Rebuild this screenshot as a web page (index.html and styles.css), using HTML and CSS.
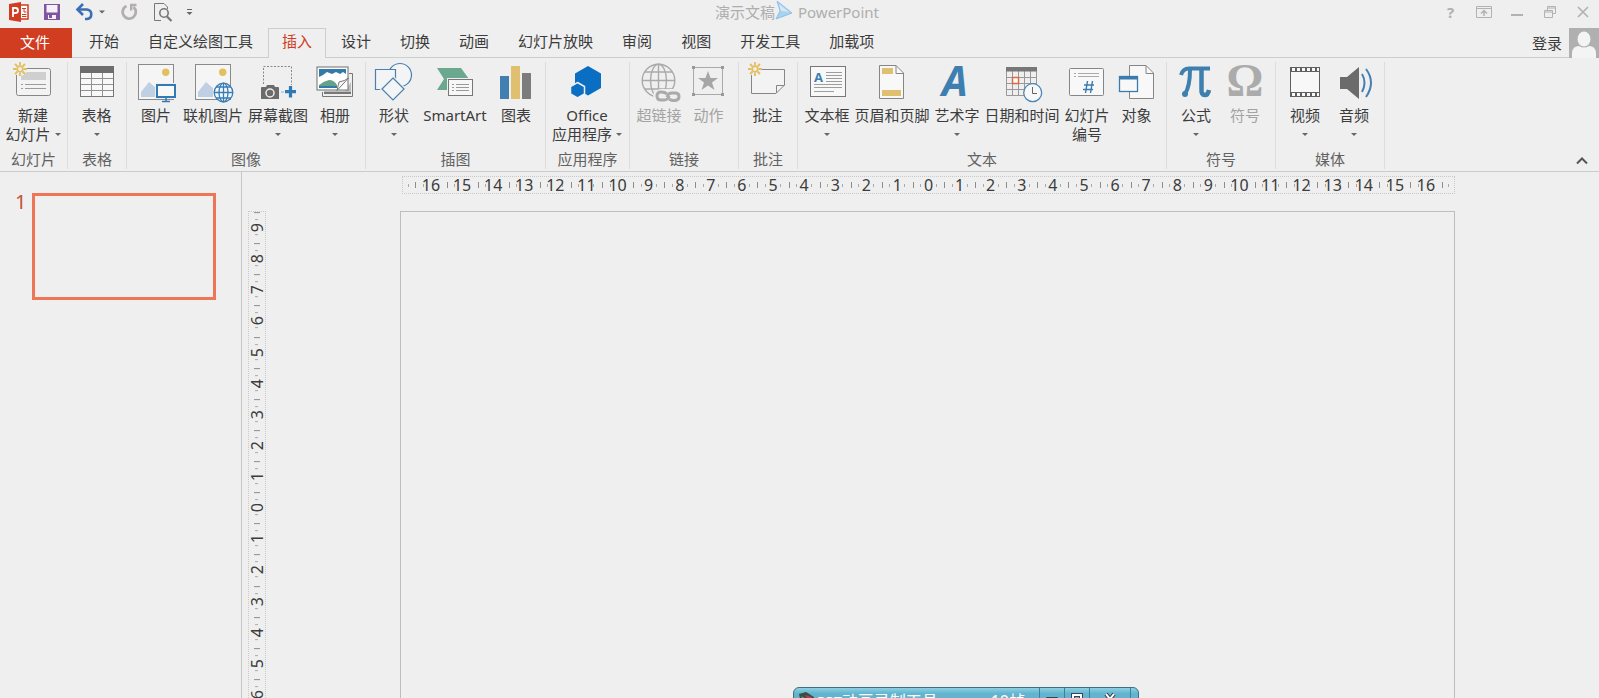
FILE: index.html
```html
<!DOCTYPE html>
<html lang="zh-CN">
<head>
<meta charset="utf-8">
<title>演示文稿 - PowerPoint</title>
<link rel="stylesheet" href="styles.css">
</head>
<body>
<svg class="defs" aria-hidden="true">
  <defs>
    <g id="sun" stroke="#e3bf62" stroke-width="1.8" fill="none">
      <path d="M0-7V-3.500M0 7V3.500M-7 0H-3.500M7 0H3.500M-5-5L-2.500-2.500M5 5L2.500 2.500M-5 5L-2.500 2.500M5-5L2.500-2.500"/>
      <circle r="2.800" fill="#efefef"/>
    </g>
    <g id="picture">
      <rect x="2.500" y="2.500" width="35" height="35" fill="#f5f5f5" stroke="#8a8a8a"/>
      <path d="M5 35V30L13 20L20 26V35Z" fill="#bfd0e4"/>
      <circle cx="29.700" cy="10.300" r="3.700" fill="#e3bf62"/>
    </g>
  </defs>
</svg>
<div class="app">
  <header class="titlebar">
    <div class="quick">
      <svg width="20" height="20" viewBox="0 0 20 20" role="img" aria-label="PowerPoint"><path d="M11 3H19V17H11Z" fill="#fff" stroke="#cf3e22" stroke-width="1.500"/><path d="M13 6.500H17M15 6V10H17.500M13 12.500H17.500M13 14.500H17.500" stroke="#cf3e22" fill="none"/><path d="M0 2L12 0V20L0 18Z" fill="#cf3e22"/><path d="M4 15V6H6.500A2.500 2.500 0 0 1 6.500 11H4" fill="none" stroke="#fff" stroke-width="1.800"/></svg>
      <button class="q-save" aria-label="保存"><svg width="16" height="16" viewBox="0 0 16 16"><path d="M0 0H16V16H0Z" fill="#7f54a0"/><path d="M2.500 1H13.500V8.500H2.500ZM4 11H12V15H4Z" fill="#f4f0f6"/><path d="M5 11H8V14H5Z" fill="#7f54a0"/></svg></button>
      <button class="q-undo" aria-label="撤消"><svg width="28" height="18" viewBox="0 0 28 18"><path d="M2 6.500H11A5 4.800 0 0 1 11 16H9" fill="none" stroke="#3a6fb5" stroke-width="2.600"/><path d="M7 1L1.500 6.500L7 12" fill="none" stroke="#3a6fb5" stroke-width="2.600"/><path d="M23 7.500H29L26 10.500Z" fill="#666"/></svg></button>
      <button class="q-redo" aria-label="恢复"><svg width="17" height="18" viewBox="0 0 17 18"><path d="M5.500 3A6.600 6.600 0 1 0 12.500 4" fill="none" stroke="#b3adb0" stroke-width="2.800"/><path d="M9 2H15.500M10.200 1.500V7.500" fill="none" stroke="#b3adb0" stroke-width="2.400"/></svg></button>
      <button class="q-view" aria-label="打印预览"><svg width="20" height="20" viewBox="0 0 20 20" fill="none" stroke="#777"><path d="M8 18.500H1.500V1.500H11L14.500 5V7"/><circle cx="11" cy="11" r="4.200" stroke-width="1.600"/><path d="M14 14.500L18.500 19" stroke-width="2.200"/></svg></button>
      <button class="q-more" aria-label="自定义快速访问工具栏"><svg width="7" height="8" viewBox="0 0 7 8"><path d="M1 1.500H6" stroke="#666"/><path d="M.5 4H6.500L3.500 7Z" fill="#666"/></svg></button>
    </div>
    <div class="title"><span>演示文稿</span><svg class="pointer" width="18" height="22" viewBox="0 0 18 22"><path d="M2 0L17 12L1 18L5 10Z" fill="#a9d2ee" stroke="#8fc0e4"/><path d="M4 3L14 11L6 10Z" fill="#d2e9f8"/></svg><span>PowerPoint</span></div>
    <div class="winctl">
      <button aria-label="帮助" class="help">?</button>
      <button aria-label="功能区显示选项"><svg width="16" height="12" viewBox="0 0 16 12" fill="none" stroke="#b2b2b2"><path d="M.5.500H15.500V11.500H.5ZM.5 2.500H15.500"/><path d="M8 10V4.500M5 7.500L8 4.500L11 7.500" stroke-width="1.500"/></svg></button>
      <button aria-label="最小化"><svg width="12" height="12" viewBox="0 0 12 12"><path d="M0 9H12" stroke="#b2b2b2" stroke-width="2"/></svg></button>
      <button aria-label="还原"><svg width="12" height="12" viewBox="0 0 12 12" fill="none" stroke="#b2b2b2"><path d="M.5 4.500H8.500V11.500H.5ZM.5 6H8.500M3.500 4V.5H11.500V7.500H9M3.500 2H11.500"/></svg></button>
      <button aria-label="关闭"><svg width="12" height="12" viewBox="0 0 12 12"><path d="M1 1L11 11M11 1L1 11" stroke="#b2b2b2" stroke-width="1.700"/></svg></button>
    </div>
  </header>

  <nav class="tabs">
    <button class="file">文件</button>
    <button class="tab">开始</button>
    <button class="tab">自定义绘图工具</button>
    <button class="tab active">插入</button>
    <button class="tab">设计</button>
    <button class="tab">切换</button>
    <button class="tab">动画</button>
    <button class="tab">幻灯片放映</button>
    <button class="tab">审阅</button>
    <button class="tab">视图</button>
    <button class="tab">开发工具</button>
    <button class="tab">加载项</button>
    <button class="login">登录<svg width="30" height="30" viewBox="0 0 30 30"><path d="M0 0H30V30H0Z" fill="#b0b0b0"/><ellipse cx="15" cy="11" rx="6.500" ry="7.500" fill="#f4f4f4"/><path d="M3 30V24Q4 18 10 18Q15 21 20 18Q26 18 27 24V30Z" fill="#f4f4f4"/></svg></button>
  </nav>

  <section class="ribbon" aria-label="插入">
    <div class="group w-slide">
      <div class="tools">
        <button class="tool"><svg class="ico" viewBox="0 0 40 42"><rect x="3.500" y="6.500" width="34" height="27" rx="2" fill="#f3f3f3" stroke="#868686"/><path d="M8 10H33V18H8Z" fill="#cfcfcf"/><path d="M8 22.500H10M12 22.500H33M8 26.500H10M12 26.500H33" stroke="#9c9c9c"/><circle cx="7" cy="7" r="7" fill="#efefef"/><use href="#sun" x="7" y="7"/></svg><span>新建</span><span class="drop">幻灯片</span></button>
      </div>
      <div class="caption">幻灯片</div>
    </div>
    <div class="group w-single">
      <div class="tools">
        <button class="tool"><svg class="ico" viewBox="0 0 40 42"><rect x="3.500" y="4.500" width="33" height="30" fill="#f8f8f8" stroke="#777"/><path d="M3 4H37V11H3Z" fill="#6d6d6d"/><path d="M14.500 11V34M25.500 11V34M4 16.500H36M4 22.500H36M4 28.500H36" stroke="#929292"/></svg><span>表格</span><span class="drop"></span></button>
      </div>
      <div class="caption">表格</div>
    </div>
    <div class="group w-image">
      <div class="tools">
        <button class="tool"><svg class="ico" viewBox="0 0 40 42"><use href="#picture"/><rect x="19" y="21" width="22" height="16" fill="#efefef"/><rect x="21" y="23" width="18" height="12" fill="#f8f8f8" stroke="#337ab5" stroke-width="2"/><path d="M30 35V39M26 39.500H34" stroke="#337ab5" stroke-width="1.500"/></svg><span>图片</span></button>
        <button class="tool"><svg class="ico" viewBox="0 0 40 42"><use href="#picture"/><g fill="none" stroke="#3a7db5" stroke-width="1.300"><circle cx="30.500" cy="30.500" r="9.300" fill="#f5f8fa"/><ellipse cx="30.500" cy="30.500" rx="4.500" ry="9.300"/><path d="M30.500 21V40M21 30.500H40M23 25H38M23 36H38"/></g></svg><span>联机图片</span></button>
        <button class="tool"><svg class="ico" viewBox="0 0 40 42"><path d="M5.500 22V4.500H33.500V23" fill="none" stroke="#888" stroke-dasharray="2 1.500"/><path d="M3 26Q3 25 4 25H8L9 23H16L17 25H20Q21 25 21 26V37H3Z" fill="#6b6b6b"/><circle cx="12" cy="31" r="4" fill="#6b6b6b" stroke="#eee" stroke-width="1.500"/><path d="M32.500 24V35.500M27 29.700H38" stroke="#2f79b5" stroke-width="3.200"/><path d="M23 30H26" stroke="#8fb5d5"/></svg><span>屏幕截图</span><span class="drop"></span></button>
        <button class="tool"><svg class="ico" viewBox="0 0 40 42"><path d="M34 11.500H37.500V34.500H7.500V30" fill="none" stroke="#777"/><path d="M9 32V29H30L36 20V32Z" fill="#bdbdbd"/><path d="M9 31H36" stroke="#777" stroke-width="2"/><rect x="2" y="5" width="31" height="23" fill="#fff" stroke="#6e6e6e"/><path d="M4 7H31V12L28 10L25 12L21 10L17 12L12 10L8 13L4 15Z" fill="#337aa8"/><path d="M4 23Q9 19 14 18Q19 18 22 23V25H4Z" fill="#62a286"/><path d="M4 25H22" stroke="#337aa8" stroke-width="2"/><path d="M33.500 16L22 28.500L24 20Q30 19 33.500 16Z" fill="#f8f8f8" stroke="#777"/></svg><span>相册</span><span class="drop"></span></button>
      </div>
      <div class="caption">图像</div>
    </div>
    <div class="group w-illus">
      <div class="tools">
        <button class="tool"><svg class="ico" viewBox="0 0 40 42" fill="#f2f4f6" stroke="#4a7fae" stroke-width="1.200"><circle cx="26" cy="13" r="11.500"/><path d="M1.500 7.500H21.500V27.500H1.500Z"/><path d="M19 16L30 27L19 38L8 27Z" stroke="#efefef" stroke-width="3.500"/><path d="M19 16L30 27L19 38L8 27Z"/></svg><span>形状</span><span class="drop"></span></button>
        <button class="tool smart"><svg class="ico" viewBox="0 0 40 42"><path d="M2 6H26L34 17L26 28H2L9 17Z" fill="#6aa890"/><rect x="12" y="16" width="27" height="19" fill="#efefef"/><rect x="13.500" y="17.500" width="24" height="16" fill="#f7f7f7" stroke="#777"/><path d="M17 22.500H19M21 22.500H34M17 25.500H19M21 25.500H34M17 28.500H19M21 28.500H34" stroke="#999"/></svg><span>SmartArt</span></button>
        <button class="tool"><svg class="ico" viewBox="0 0 40 42"><path d="M4 14H13V37H4Z" fill="#417fb0"/><path d="M15 4H24V37H15Z" fill="#e0bf6e"/><path d="M26 11H35V37H26Z" fill="#7c7c7c"/></svg><span>图表</span></button>
      </div>
      <div class="caption">插图</div>
    </div>
    <div class="group w-app">
      <div class="tools">
        <button class="tool"><svg class="ico" viewBox="0 0 40 42" fill="#0a6fc2"><path d="M21 4L34 11.500V26L21 33.500L8 26V11.500Z"/><path d="M10.500 20.500L17.500 24.500V32L10.500 36L3.500 32V24.500Z" stroke="#efefef" stroke-width="1.500"/></svg><span>Office</span><span class="drop">应用程序</span></button>
      </div>
      <div class="caption">应用程序</div>
    </div>
    <div class="group w-pair">
      <div class="tools">
        <button class="tool" disabled><svg class="ico" viewBox="0 0 40 42" fill="none" stroke="#aaa" stroke-width="1.400"><circle cx="19.500" cy="18.500" r="16.300"/><ellipse cx="19.500" cy="18.500" rx="8" ry="16.300"/><path d="M19.500 2V35M3 18.500H36M6 10H33M6 27H33"/><path d="M14 34Q14 28 22 27H35Q42 28 42 35V41H20Z" fill="#efefef" stroke="none"/><g stroke-width="3"><path d="M28 32Q26 30 22 30Q18 30 18 34Q18 38 22 38H25Q29 38 30 34"/><path d="M30 37Q33 39 36 38.500Q40 38 40 34.500Q40 31 36 31H33Q29 31 28 35"/></g></svg><span>超链接</span></button>
        <button class="tool" disabled><svg class="ico" viewBox="0 0 40 42"><rect x="4.500" y="5.500" width="29" height="27" fill="none" stroke="#aaa"/><path d="M3 4H6V7H3ZM32 4H35V7H32ZM3 31H6V34H3ZM32 31H35V34H32Z" fill="#999"/><path d="M19 9L21.500 16H29L23 20.500L25.500 28L19 23.500L12.500 28L15 20.500L9 16H16.500Z" fill="#a6a6a6"/></svg><span>动作</span></button>
      </div>
      <div class="caption">链接</div>
    </div>
    <div class="group w-single">
      <div class="tools">
        <button class="tool"><svg class="ico" viewBox="0 0 40 42"><path d="M3.500 7.500H36.500V23L28 31.500H3.500Z" fill="#f3f3f3" stroke="#868686"/><path d="M36.500 23.500H28.500V31" fill="none" stroke="#868686"/><circle cx="7" cy="7" r="7" fill="#efefef"/><use href="#sun" x="7" y="7"/></svg><span>批注</span></button>
      </div>
      <div class="caption">批注</div>
    </div>
    <div class="group w-text">
      <div class="tools">
        <button class="tool"><svg class="ico" viewBox="0 0 40 42"><rect x="3.500" y="4.500" width="35" height="30" fill="#f8f8f8" stroke="#777"/><path d="M19 10.500H35M19 13.500H35M19 16.500H35M19 19.500H35M7 22.500H35M7 25.500H35M7 29.500H27" stroke="#9d9d9d"/><text x="7" y="20" class="a-small">A</text></svg><span>文本框</span><span class="drop"></span></button>
        <button class="tool"><svg class="ico" viewBox="0 0 40 42"><path d="M7.500 3.500H24L31.500 11V36.500H7.500Z" fill="#f8f8f8" stroke="#868686"/><path d="M24 3.500V11.500H31.500" fill="none" stroke="#868686"/><path d="M10 6H21V12H10ZM10 28H29V34H10Z" fill="#e0bf6e"/></svg><span>页眉和页脚</span></button>
        <button class="tool"><svg class="ico" viewBox="0 0 40 42"><text x="5" y="34" class="a-art">A</text></svg><span>艺术字</span><span class="drop"></span></button>
        <button class="tool"><svg class="ico" viewBox="0 0 40 42"><path d="M4.500 9V33.500H34.500V9M10.500 9V33M16.500 9V33M22.500 9V33M28.500 9V33M4 15.500H34M4 21.500H34M4 27.500H34" fill="none" stroke="#999"/><path d="M4 5H35V9.500H4Z" fill="#777"/><rect x="10.500" y="15.500" width="6" height="6" fill="#fff" stroke="#dc6a42" stroke-width="1.500"/><circle cx="30.700" cy="30.700" r="9" fill="#f8f8f8" stroke="#4d86b5" stroke-width="1.300"/><path d="M30.500 25V31.500H35" fill="none" stroke="#666"/></svg><span>日期和时间</span></button>
        <button class="tool"><svg class="ico" viewBox="0 0 40 42"><rect x="2.500" y="6.500" width="34" height="27" rx="1" fill="#f8f8f8" stroke="#868686"/><path d="M7 11.500H9M11 11.500H32M7 14.500H9M11 14.500H32" stroke="#aaa"/><path d="M20.500 19L18.500 31M25.500 19L23.500 31M17 23H27M16 27.500H26" stroke="#3b7cae" stroke-width="1.400"/></svg><span>幻灯片</span><span>编号</span></button>
        <button class="tool"><svg class="ico" viewBox="0 0 40 42"><path d="M12.500 3.500H29L36.500 11V36.500H12.500Z" fill="#f8f8f8" stroke="#868686"/><path d="M29 3.500V11.500H36.500" fill="none" stroke="#868686"/><rect x="2.500" y="14.500" width="18" height="15" fill="#f8f8f8" stroke="#3b7cae" stroke-width="1.300"/><path d="M2 14H21V17.500H2Z" fill="#3b7cae"/></svg><span>对象</span></button>
      </div>
      <div class="caption">文本</div>
    </div>
    <div class="group w-pair">
      <div class="tools">
        <button class="tool"><svg class="ico" viewBox="0 0 40 42" fill="none" stroke="#3d7fae"><path d="M5 13Q7 6.500 13 6.500H34" stroke-width="4"/><path d="M14 8Q14 24 9 32" stroke-width="4"/><circle cx="9" cy="32" r="3" fill="#3d7fae" stroke="none"/><path d="M25.500 8V27Q25 33 29 33Q32 33 33 28" stroke-width="4.500"/></svg><span>公式</span><span class="drop"></span></button>
        <button class="tool" disabled><svg class="ico" viewBox="0 0 40 42"><text x="20" y="34" class="omega">Ω</text></svg><span>符号</span></button>
      </div>
      <div class="caption">符号</div>
    </div>
    <div class="group w-pair">
      <div class="tools">
        <button class="tool"><svg class="ico" viewBox="0 0 40 42"><path d="M5 5H35V35H5Z" fill="#5f5f5f"/><path d="M6 10H34V30H6Z" fill="#f8f8f8"/><path d="M7 7.500H34M7 32.500H34" stroke="#f8f8f8" stroke-width="3" stroke-dasharray="3 2"/></svg><span>视频</span><span class="drop"></span></button>
        <button class="tool"><svg class="ico" viewBox="0 0 40 42"><path d="M6 15H13L25 5V37L13 27H6Z" fill="#6b6b6b"/><path d="M28 12Q33 20.500 28 30M32 7Q42 20.500 32 35" fill="none" stroke="#4680b0" stroke-width="2"/></svg><span>音频</span><span class="drop"></span></button>
      </div>
      <div class="caption">媒体</div>
    </div>
    <button class="collapse" aria-label="折叠功能区"><svg width="12" height="8" viewBox="0 0 12 8"><path d="M1 6.500L6 1.500L11 6.500" fill="none" stroke="#555" stroke-width="2"/></svg></button>
  </section>

  <main class="work">
    <aside class="slides">
      <span class="num">1</span>
      <button class="thumb" aria-label="幻灯片 1"></button>
    </aside>
    <section class="stage">
      <div class="ruler-h" aria-hidden="true"><i></i><span>16</span><span>15</span><span>14</span><span>13</span><span>12</span><span>11</span><span>10</span><span>9</span><span>8</span><span>7</span><span>6</span><span>5</span><span>4</span><span>3</span><span>2</span><span>1</span><span>0</span><span>1</span><span>2</span><span>3</span><span>4</span><span>5</span><span>6</span><span>7</span><span>8</span><span>9</span><span>10</span><span>11</span><span>12</span><span>13</span><span>14</span><span>15</span><span>16</span><i class="end"></i></div>
      <div class="ruler-v" aria-hidden="true"><span>9</span><span>8</span><span>7</span><span>6</span><span>5</span><span>4</span><span>3</span><span>2</span><span>1</span><span>0</span><span>1</span><span>2</span><span>3</span><span>4</span><span>5</span><span>6</span><span>7</span><span>8</span><span>9</span></div>
      <div class="slide"></div>
    </section>
  </main>

  <div class="recorder">
    <svg class="rec-logo" width="16" height="16" viewBox="0 0 16 16"><path d="M0 2L7 0L15 5L13 16H3Z" fill="#3c4a48"/><path d="M6 3L13 5L10 9Z" fill="#a44a3c"/><path d="M2 4L6 6L5 12Z" fill="#5c9a6b"/></svg>
    <span class="rec-name"><small>PPT</small>动画录制工具</span>
    <span class="rec-rate">10帧</span>
    <button aria-label="最小化录制工具"><svg width="12" height="14" viewBox="0 0 12 14"><path d="M.5 5.500H11.500V8.500H.5Z" fill="#fff" stroke="#345"/></svg></button>
    <button aria-label="最大化录制工具"><svg width="12" height="14" viewBox="0 0 12 14"><path d="M2 3H10V11H2Z" fill="none" stroke="#345" stroke-width="4"/><path d="M2 3H10V11H2Z" fill="none" stroke="#fff" stroke-width="2"/></svg></button>
    <button class="rec-close" aria-label="关闭录制工具"><svg width="12" height="14" viewBox="0 0 12 14"><path d="M2 2L10 12M10 2L2 12" stroke="#345" stroke-width="4"/><path d="M2 2L10 12M10 2L2 12" stroke="#fff" stroke-width="2"/></svg></button>
  </div>
</div>
</body>
</html>
```

FILE: styles.css
```css
* { box-sizing: border-box; }

body {
  margin: 0;
  background: #efefef;
  color: #3c3c3c;
  font: 15px/19px "Noto Sans", "Noto Sans CJK SC", sans-serif;
}

button {
  margin: 0;
  padding: 0;
  border: 0;
  background: none;
  color: inherit;
  font: inherit;
}

svg { display: block; flex: none; }
.defs { position: absolute; width: 0; height: 0; }

.app {
  position: relative;
  display: flex;
  flex-direction: column;
  height: 100vh;
  overflow: hidden;
}

/* Title bar */
.titlebar {
  display: grid;
  grid-template-columns: 1fr auto 1fr;
  align-items: center;
  height: 28px;
  padding-bottom: 4px;
}
.quick { display: flex; align-items: center; padding-left: 9px; }
.q-save { margin-left: 15px; }
.q-undo { margin-left: 16px; }
.q-redo { margin-left: 17px; }
.q-view { margin-left: 15px; }
.q-more { margin-left: 13px; }
.quick svg { overflow: visible; }
.title { display: flex; align-items: center; padding-right: 5px; color: #aeaeae; }
.pointer { margin-right: 5px; }
.winctl { display: flex; justify-content: flex-end; }
.winctl button { display: grid; place-items: center; width: 33px; height: 24px; }
.winctl .help { color: #b0b0b0; font-weight: 700; }

/* Tabs */
.tabs {
  display: flex;
  height: 30px;
  border-bottom: 1px solid #cdcdcd;
}
.tabs button { white-space: nowrap; }
.file {
  width: 72px;
  height: 30px;
  margin-right: 3px;
  background: #d03d20;
  color: #fff;
}
.tabs .file { padding: 0 2px 2px 0; }
.tabs .tab {
  height: 29px;
  margin-right: 1px;
  padding: 0 13px 3px;
  border: 1px solid transparent;
  border-bottom: 0;
}
.tabs .active {
  height: 30px;
  padding-bottom: 4px;
  border-color: #cdcdcd;
  background: #efefef;
  color: #d03d20;
}
.login {
  display: flex;
  align-items: center;
  gap: 7px;
  height: 30px;
  margin-left: auto;
}

/* Ribbon */
.ribbon {
  display: flex;
  height: 114px;
  padding: 4px 0 2px;
  border-bottom: 1px solid #cbcbcb;
}
.group {
  display: flex;
  flex: none;
  flex-direction: column;
  border-right: 1px solid #dcdcdc;
}
.w-slide { width: 68px; }
.w-single { width: 59px; }
.w-image { width: 239px; }
.w-illus { width: 180px; }
.w-app { width: 84px; }
.w-pair { width: 109px; }
.w-text { width: 369px; }
.tools { display: flex; flex: 1; justify-content: center; }
.tool {
  display: flex;
  flex-direction: column;
  align-items: center;
  min-width: 49px;
  padding: 0 3px 0 2px;
  white-space: nowrap;
}
.smart { min-width: 73px; }
.tool:disabled { color: #a3a3a3; }
.ico { width: 40px; height: 42px; margin-bottom: 2px; overflow: visible; }
.drop { display: flex; align-items: center; gap: 4px; height: 19px; }
.drop::after {
  content: "";
  border: 3px solid transparent;
  border-top-color: #666;
  border-bottom: 0;
}
.caption { color: #626262; text-align: center; }
.a-small { fill: #3d7fb0; font: 700 13px "Open Sans", sans-serif; }
.a-art { fill: #3d7fb0; font: italic 700 41px "Open Sans", sans-serif; }
.omega {
  fill: #ababab;
  font: 700 46px "Liberation Serif", serif;
  text-anchor: middle;
}
.collapse { align-self: flex-end; margin: 0 11px 4px auto; }

/* Work area */
.work { display: flex; flex: 1; min-height: 0; }
.slides {
  display: flex;
  flex: none;
  align-items: flex-start;
  width: 242px;
  padding: 21px 25px 0 15px;
  border-right: 1px solid #c6c6c6;
}
.num { width: 17px; color: #c4523a; font-size: 20px; line-height: 18px; }
.thumb {
  flex: 1;
  aspect-ratio: 184 / 107;
  border: 3px solid #ee7556;
}
.stage {
  display: grid;
  flex: 1;
  grid-template-columns: 18px 1fr;
  grid-template-rows: 18px auto;
  align-content: start;
  row-gap: 17px;
  column-gap: 134px;
  min-width: 0;
  padding: 4px 144px 0 6px;
  overflow: hidden;
}
.ruler-h {
  display: flex;
  grid-column: 2;
  margin-left: 2px;
  border: 1px dotted #c9c9c9;
  font-size: 16px;
  line-height: 16px;
}
.ruler-h span {
  flex: 1 1 0;
  min-width: 0;
  text-align: center;
  background:
    linear-gradient(#8c8c8c, #8c8c8c) 0 50% / 1px 6px no-repeat,
    linear-gradient(#aaa, #aaa) 25% 50% / 1px 3px no-repeat,
    linear-gradient(#aaa, #aaa) 75% 50% / 1px 3px no-repeat;
}
.ruler-h i {
  flex: .4 1 0;
  background: linear-gradient(#aaa, #aaa) 40% 50% / 1px 3px no-repeat;
}
.ruler-h .end {
  background:
    linear-gradient(#8c8c8c, #8c8c8c) 0 50% / 1px 6px no-repeat,
    linear-gradient(#aaa, #aaa) 60% 50% / 1px 3px no-repeat;
}
.ruler-v {
  display: flex;
  flex-direction: column;
  border: 1px dotted #c9c9c9;
  font-size: 16px;
  line-height: 16px;
}
.ruler-v span {
  flex: 1 1 0;
  min-height: 0;
  writing-mode: vertical-rl;
  transform: rotate(180deg);
  text-align: center;
  background:
    linear-gradient(#8c8c8c, #8c8c8c) 50% 100% / 6px 1px no-repeat,
    linear-gradient(#aaa, #aaa) 50% 25% / 3px 1px no-repeat,
    linear-gradient(#aaa, #aaa) 50% 75% / 3px 1px no-repeat;
}
.slide { aspect-ratio: 16 / 9; border: 1px solid #bdbdbd; }

/* Floating recorder window, partly below the screen edge */
.recorder {
  position: absolute;
  bottom: -19px;
  left: 793px;
  display: flex;
  align-items: center;
  width: 346px;
  height: 30px;
  padding: 0 7px 0 5px;
  border: 1px solid #3f6f80;
  border-radius: 6px 6px 0 0;
  background: linear-gradient(#8fd0e2, #62b4cf 20%, #6cadcd);
  color: #fff;
  font-size: 16px;
}
.rec-name { margin-left: 2px; padding-bottom: 2px; }
.rec-name small { font-size: 14px; }
.rec-rate { margin: 0 14px 0 auto; padding-bottom: 2px; }
.recorder button {
  display: grid;
  place-items: center;
  width: 25px;
  height: 28px;
  padding-bottom: 6px;
  border-left: 1px solid #3f7f98;
}
.rec-logo { margin-bottom: 4px; }
.recorder .rec-close { width: 42px; border-right: 1px solid #3f7f98; }
```
